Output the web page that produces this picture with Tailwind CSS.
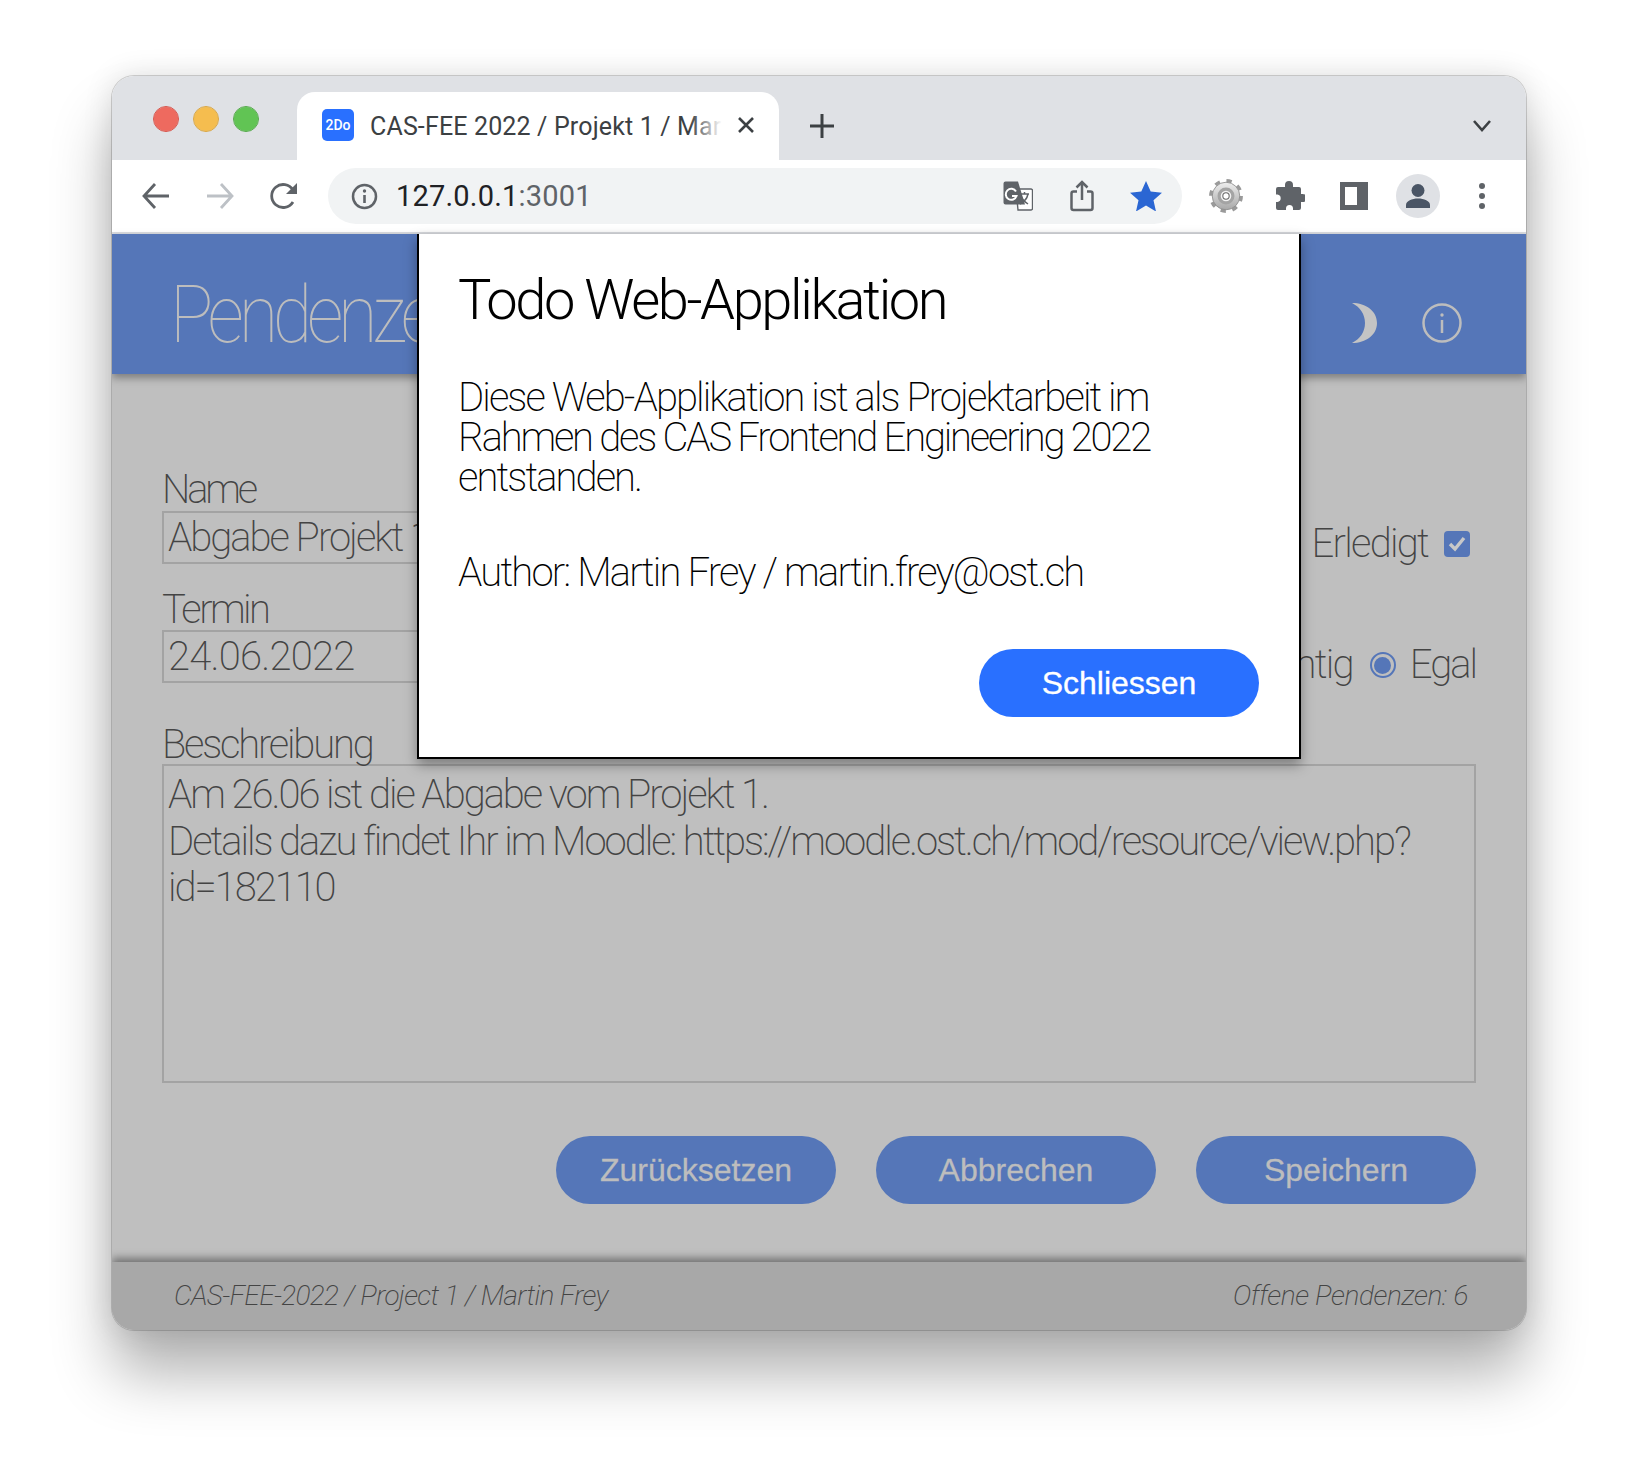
<!doctype html>
<html lang="de"><head><meta charset="utf-8"><title>CAS-FEE 2022</title>
<script src="https://cdn.jsdelivr.net/npm/@tailwindcss/browser@4"></script></head>
<body class="m-0 h-[1478px] w-[1638px] overflow-hidden bg-white">
<div class="pl-[112px] pt-[76px]">
<div class="relative flex h-[1254px] w-[1414px] flex-col overflow-hidden rounded-[22px] bg-white shadow-[0_44px_60px_rgba(0,0,0,0.3),0_0_30px_rgba(0,0,0,0.12),0_0_0_1px_rgba(0,0,0,0.16)] font-['Roboto',sans-serif]">
  <!-- tab strip -->
  <div class="flex h-[84px] shrink-0 items-start bg-[#dfe1e5]">
    <div class="flex w-[185px] shrink-0 gap-[16px] pl-[42px] pt-[31px]">
      <span class="h-[24px] w-[24px] rounded-full bg-[#ee6a5f] outline outline-[#d9534a]"></span>
      <span class="h-[24px] w-[24px] rounded-full bg-[#f5bd4f] outline outline-[#dba63f]"></span>
      <span class="h-[24px] w-[24px] rounded-full bg-[#61c454] outline outline-[#52a947]"></span>
    </div>
    <div class="mt-[16px] flex h-[68px] w-[482px] shrink-0 items-center rounded-t-[18px] bg-white pl-[25px] pb-[2px]">
      <span class="flex h-[32px] w-[32px] shrink-0 items-center justify-center rounded-[5px] bg-[#2970ff] text-[14px] font-medium text-white">2Do</span>
      <span class="relative ml-[16px] mt-[4px] w-[352px] overflow-hidden whitespace-nowrap text-[25px] tracking-[0.15px] text-[#3c4043]">CAS-FEE 2022 / Projekt 1 / Martin Frey<span class="absolute inset-y-0 right-0 w-[32px] bg-gradient-to-r from-white/0 to-white"></span></span>
      <svg class="ml-[14px] shrink-0" width="20" height="20" viewBox="0 0 20 20"><path d="M3 3l14 14M17 3L3 17" stroke="#3c4043" stroke-width="2.6"/></svg>
    </div>
    <svg class="ml-[30px] mt-[37px] shrink-0" width="26" height="26" viewBox="0 0 26 26"><path d="M13 1v24M1 13h24" stroke="#3c4043" stroke-width="3"/></svg>
    <div class="flex flex-1 justify-end pr-[34px] pt-[43px]"><svg width="20" height="14" viewBox="0 0 20 14"><path d="M2 2l8 9 8-9" fill="none" stroke="#3c4043" stroke-width="2.6"/></svg></div>
  </div>
  <!-- toolbar -->
  <div class="flex h-[74px] shrink-0 items-center border-b-2 border-[#dadce0] bg-white">
    <div class="flex w-[216px] shrink-0 items-center gap-[34px] pl-[29px]">
      <svg width="30" height="30" viewBox="0 0 30 30"><path d="M28 15H3M14 3L3 15l11 12" fill="none" stroke="#5f6368" stroke-width="2.8"/></svg>
      <svg width="30" height="30" viewBox="0 0 30 30"><path d="M2 15h25M16 3l11 12-11 12" fill="none" stroke="#bdc1c6" stroke-width="2.8"/></svg>
      <svg width="30" height="30" viewBox="0 0 30 30"><path d="M24 21a11.5 11.5 0 1 1 0-12" fill="none" stroke="#5f6368" stroke-width="2.8"/><path d="M28 2v11H17z" fill="#5f6368"/></svg>
    </div>
    <div class="flex h-[56px] w-[854px] shrink-0 items-center rounded-full bg-[#f1f3f4] pl-[23px]">
      <svg width="27" height="27" viewBox="0 0 27 27"><circle cx="13.5" cy="13.5" r="11.5" fill="none" stroke="#5f6368" stroke-width="2.5"/><path d="M13.5 12v8" stroke="#5f6368" stroke-width="2.6"/><circle cx="13.5" cy="8" r="1.7" fill="#5f6368"/></svg>
      <span class="ml-[18px] mt-[2px] whitespace-nowrap text-[29px] tracking-[0.2px] text-[#202124]">127.0.0.1<span class="text-[#5f6368]">:3001</span></span>
      <div class="ml-auto flex items-center pr-[4px]">
        <span class="flex w-[64px] justify-center"><svg width="30" height="30" viewBox="0 0 30 30"><path d="M13 8h15a1.5 1.5 0 0 1 1.5 1.5v18a1.5 1.5 0 0 1-1.5 1.5H15z" fill="#fff" stroke="#5f6368" stroke-width="1.4"/><path d="M2.5 0.5H15L22 23.500H2.500A2 2 0 0 1 0.500 21.500V2.500A2 2 0 0 1 2.500 .5z" fill="#5f6368"/><path d="M13 10.500A5.500 5.500 0 1 0 13.500 15H9" fill="none" stroke="#fff" stroke-width="2"/><path d="M17 13h9M21.500 11v2M25 13c-1 5-4 8-8 10M18 15c1 3 4 6 7 8" fill="none" stroke="#5f6368" stroke-width="1.500"/></svg></span>
        <span class="flex w-[64px] justify-center"><svg width="24" height="32" viewBox="0 0 24 32"><path d="M7 11.500H3.500A2 2 0 0 0 1.500 13.500V28a2 2 0 0 0 2 2h17a2 2 0 0 0 2-2V13.500a2 2 0 0 0-2-2H17M12 20V2M6.500 7.500L12 2l5.500 5.500" fill="none" stroke="#5f6368" stroke-width="2.500"/></svg></span>
        <span class="flex w-[64px] justify-center"><svg width="32" height="30" viewBox="0 0 32 30"><path d="M16 0l4.700 10.600 11.300 1.100-8.500 7.600 2.500 11.200L16 24.600 6 30.500l2.500-11.200L0 11.700l11.300-1.100z" fill="#2b66d3"/></svg></span>
      </div>
    </div>
    <div class="flex flex-1 items-center pl-[12px]">
      <span class="flex w-[64px] justify-center"><svg width="34" height="36" viewBox="0 0 32 34"><defs><linearGradient id="g" x1="0" y1="0" x2="0" y2="1"><stop offset="0" stop-color="#eeeeee"/><stop offset="1" stop-color="#a8a8a8"/></linearGradient></defs><circle cx="16" cy="17" r="13" fill="none" stroke="#9a9a9a" stroke-width="6" stroke-dasharray="4.500 5.710"/><circle cx="16" cy="17" r="13" fill="url(#g)" stroke="#8c8c8c" stroke-width=".8"/><circle cx="16" cy="17" r="6.500" fill="#f2f2f2" stroke="#a4a4a4" stroke-width="3"/><circle cx="16" cy="17" r="3" fill="#fff" stroke="#666"/></svg></span>
      <span class="flex w-[64px] justify-center"><svg width="30" height="30" viewBox="0 0 30 30"><path d="M10 4a4 4 0 0 1 8 0v2h6a2 2 0 0 1 2 2v5h1.500a4 4 0 0 1 0 8H26v6a2 2 0 0 1-2 2h-6v-1.500a3.500 3.500 0 0 0-7 0V29H3a2 2 0 0 1-2-2v-6h1.500a3.800 3.800 0 0 0 0-7.500H1V8a2 2 0 0 1 2-2h7z" fill="#5f6368"/></svg></span>
      <span class="flex w-[64px] justify-center"><span class="block h-[28px] w-[28px] border-[5px] border-r-[11px] border-[#5f6368] bg-white"></span></span>
      <span class="flex w-[64px] justify-center"><span class="flex h-[44px] w-[44px] items-center justify-center rounded-full bg-[#dfe1e5]"><svg width="26" height="26" viewBox="0 0 26 26"><circle cx="13" cy="7.500" r="6.500" fill="#4a5565"/><path d="M1 25v-3c0-4 6-6.500 12-6.500s12 2.500 12 6.500v3z" fill="#4a5565"/></svg></span></span>
      <span class="flex w-[64px] justify-center"><svg width="8" height="28" viewBox="0 0 8 28"><circle cx="4" cy="4" r="3" fill="#5f6368"/><circle cx="4" cy="14" r="3" fill="#5f6368"/><circle cx="4" cy="24" r="3" fill="#5f6368"/></svg></span>
    </div>
  </div>
  <!-- app -->
  <div class="relative flex flex-1 flex-col bg-[#bfbfbf]">
    <header class="relative z-10 flex h-[140px] shrink-0 items-start justify-between overflow-hidden bg-[#5576b8] pl-[58px] pr-[64px] shadow-[0_4px_8px_rgba(0,0,0,0.35)]">
      <h1 class="mt-[36px] origin-left scale-x-[0.9] text-[80px] font-[250] leading-[90px] tracking-[-5.800px] text-[#bdbdbd]">Pendenzen</h1>
      <div class="mt-[69px] flex items-center gap-[44px]">
        <svg width="28" height="40" viewBox="0 0 28 40"><path d="M2 0C16 0 27 8 27 20S16 40 2 40c8-4 13-11 13-20S10 4 2 0z" fill="#c4c4c4"/></svg>
        <svg width="40" height="40" viewBox="0 0 40 40"><circle cx="20" cy="20" r="18.500" fill="none" stroke="#bdbdbd" stroke-width="2.500"/><path d="M20 17v13" stroke="#bdbdbd" stroke-width="2.500"/><circle cx="20" cy="12" r="1.700" fill="#bdbdbd"/></svg>
      </div>
    </header>
    <form class="flex-1 px-[50px] pt-[93px] text-[40px] font-extralight text-[#444]">
      <div class="flex h-[97px] items-start justify-between">
        <div><div class="h-[44px] leading-[45px] tracking-[-3.200px]">Name</div><div class="box-border h-[53px] w-[700px] border-2 border-[#a3a3a3] pl-[4px] pt-[2px] leading-[46px] tracking-[-2px]">Abgabe Projekt 1</div></div>
        <div class="mr-[6px] mt-[54px] flex items-center gap-[16px]"><span class="leading-[46px] tracking-[-1.75px]">Erledigt</span><span class="flex h-[26px] w-[26px] items-center justify-center rounded-[4px] bg-[#5576b8]"><svg width="18" height="16" viewBox="0 0 18 16"><path d="M2 8l5 5 9-11" fill="none" stroke="#c8c8c8" stroke-width="3.400"/></svg></span></div>
      </div>
      <div class="mt-[22px] flex h-[97px] items-start justify-between">
        <div><div class="h-[44px] leading-[47px] tracking-[-2.600px]">Termin</div><div class="box-border h-[53px] w-[400px] border-2 border-[#a3a3a3] pl-[4px] pt-[2px] leading-[46px] tracking-[-0.75px]">24.06.2022</div></div>
        <div class="mt-[56px] flex items-center gap-[17px]"><span class="leading-[46px] tracking-[-1.75px]">Wichtig</span><span class="flex h-[26px] w-[26px] items-center justify-center rounded-full border-2 border-[#5576b8]"><span class="h-[17px] w-[17px] rounded-full bg-[#5576b8]"></span></span><span class="ml-[-3px] leading-[46px] tracking-[-2px]">Egal</span></div>
      </div>
      <div class="mt-[37px] h-[44px] leading-[50px] tracking-[-2.200px]">Beschreibung</div>
      <div class="box-border h-[319px] border-2 border-[#a3a3a3] px-[4px] pt-[6px] leading-[46.500px] tracking-[-2.030px]">Am 26.06 ist die Abgabe vom Projekt 1.<br>Details dazu findet Ihr im Moodle: https://moodle.ost.ch/mod/resource/view.php?<br>id=182110</div>
      <div class="mt-[53px] flex justify-end gap-[40px] font-['Liberation_Sans',sans-serif] text-[32px] font-normal text-[#bdbdbd] [-webkit-text-stroke:0.3px_currentColor]">
        <button type="button" class="h-[68px] w-[280px] rounded-full bg-[#5576b8]">Zurücksetzen</button>
        <button type="button" class="h-[68px] w-[280px] rounded-full bg-[#5576b8]">Abbrechen</button>
        <button type="button" class="h-[68px] w-[280px] rounded-full bg-[#5576b8]">Speichern</button>
      </div>
    </form>
    <footer class="relative flex h-[68px] shrink-0 items-center justify-between bg-[#a8a8a8] pl-[62px] pr-[58px] text-[28px] font-extralight italic text-[#444] shadow-[0_-4px_8px_rgba(0,0,0,0.4)]">
      <span class="tracking-[-0.650px]">CAS-FEE-2022 / Project 1 / Martin Frey</span><span class="tracking-[-0.350px]">Offene Pendenzen: 6</span>
    </footer>
    <!-- dialog -->
    <div class="absolute left-[305px] top-0 z-20 box-border h-[525px] w-[884px] border-x-2 border-b-2 border-black bg-white pl-[39px] pr-[40px] font-extralight text-black shadow-[0_6px_12px_rgba(0,0,0,0.35)]">
      <h2 class="mt-[31px] text-[56px] font-light leading-[70px] tracking-[-2.4px]">Todo Web-Applikation</h2>
      <p class="mt-[43px] text-[40px] leading-[40px] tracking-[-1.920px]"><span class="block">Diese Web-Applikation ist als Projektarbeit im</span><span class="block tracking-[-2.200px]">Rahmen des CAS Frontend Engineering 2022</span><span class="block">entstanden.</span></p>
      <p class="mt-[52px] text-[40px] leading-[46px] tracking-[-1.800px]">Author: Martin Frey / martin.frey@ost.ch</p>
      <div class="mt-[53px] flex justify-end"><button type="button" class="h-[68px] w-[280px] rounded-full bg-[#2970ff] font-['Liberation_Sans',sans-serif] text-[32px] font-normal tracking-normal text-white [-webkit-text-stroke:0.3px_currentColor]">Schliessen</button></div>
    </div>
  </div>
</div>
</div>
</body></html>
